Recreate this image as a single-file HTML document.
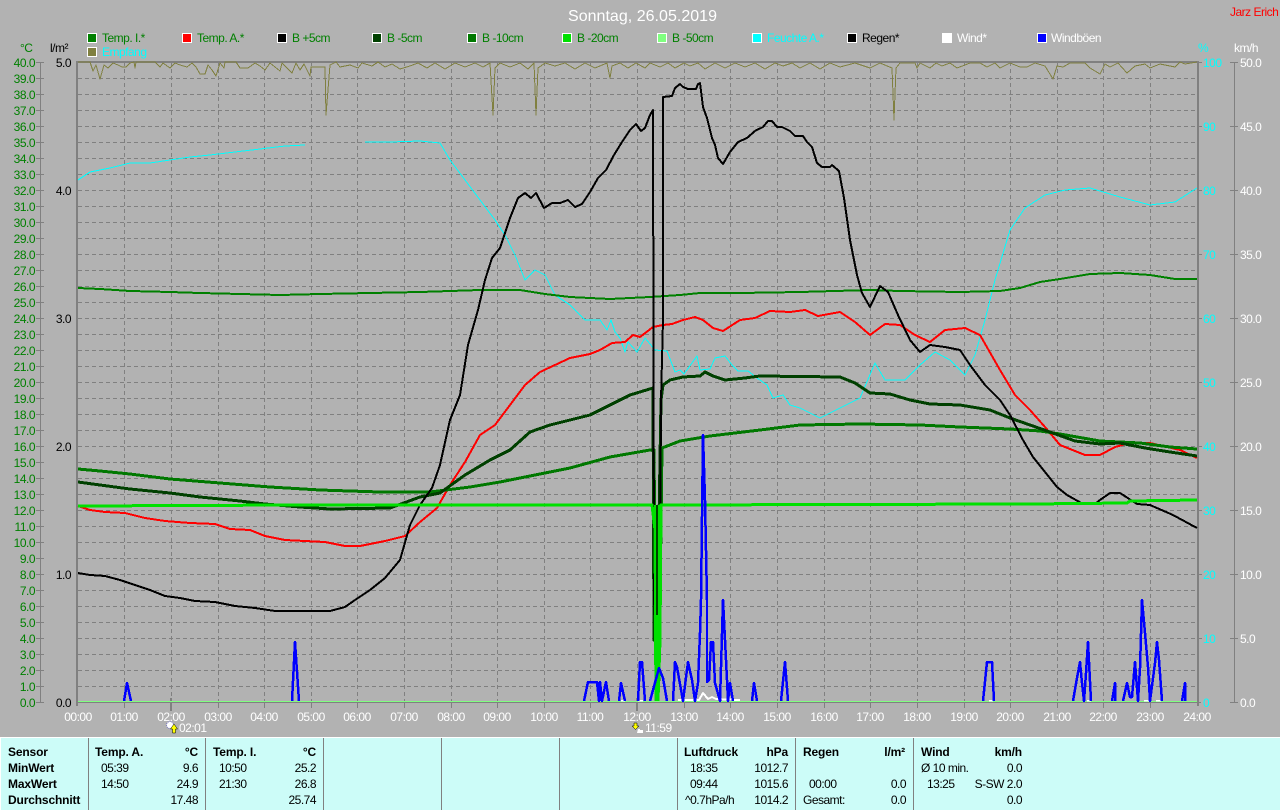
<!DOCTYPE html>
<html lang="de"><head><meta charset="utf-8"><title>Sonntag, 26.05.2019</title>
<style>
html,body{margin:0;padding:0;width:1280px;height:810px;overflow:hidden;background:#b2b2b2}
svg{display:block;position:absolute;left:0;top:0}
text{font-family:"Liberation Sans",Arial,sans-serif;font-size:12px;letter-spacing:-.5px}
.g text{fill:#008000}
.e{text-anchor:end}
.c{text-anchor:middle}
.b{font-weight:bold;letter-spacing:-.15px}
.p text{fill:#000}
polyline{fill:none;stroke-linejoin:round}
</style></head><body>
<svg width="1280" height="810" viewBox="0 0 1280 810" xmlns="http://www.w3.org/2000/svg">
<!-- title -->
<text x="568" y="21" fill="#fff" style="font-size:16px;letter-spacing:0" textLength="149">Sonntag, 26.05.2019</text>
<text x="1230" y="16" fill="#f00">Jarz Erich</text>
<!-- legend -->
<g stroke="#fff" stroke-width="1" shape-rendering="crispEdges">
<rect x="87.5" y="33.5" width="9" height="9" fill="#008000"/>
<rect x="182.5" y="33.5" width="9" height="9" fill="#f00"/>
<rect x="277.5" y="33.5" width="9" height="9" fill="#000"/>
<rect x="372.5" y="33.5" width="9" height="9" fill="#004000"/>
<rect x="467.5" y="33.5" width="9" height="9" fill="#007800"/>
<rect x="562.5" y="33.5" width="9" height="9" fill="#00e000"/>
<rect x="657.5" y="33.5" width="9" height="9" fill="#80ff80"/>
<rect x="752.5" y="33.5" width="9" height="9" fill="#0ff"/>
<rect x="847.5" y="33.5" width="9" height="9" fill="#000"/>
<rect x="942.5" y="33.5" width="9" height="9" fill="#fff"/>
<rect x="1037.5" y="33.5" width="9" height="9" fill="#00f"/>
<rect x="87.5" y="47.5" width="9" height="9" fill="#808040"/>
</g>
<g class="g">
<text x="102" y="42">Temp. I.*</text><text x="197" y="42">Temp. A.*</text><text x="292" y="42">B +5cm</text><text x="387" y="42">B -5cm</text><text x="482" y="42">B -10cm</text><text x="577" y="42">B -20cm</text><text x="672" y="42">B -50cm</text>
</g>
<text x="767" y="42" fill="#0ff">Feuchte A.*</text>
<text x="862" y="42" fill="#000">Regen*</text>
<text x="957" y="42" fill="#fff">Wind*</text>
<text x="1051" y="42" fill="#fff">Windböen</text>
<text x="102" y="56" fill="#0ff">Empfang</text>
<!-- axis headers -->
<text x="20" y="52" fill="#008000">°C</text>
<text x="50" y="52" fill="#000">l/m²</text>
<text x="1198" y="52" fill="#0ff">%</text>
<text x="1234" y="52" fill="#fff">km/h</text>
<!-- grid -->
<g stroke="#808080" stroke-width="1" stroke-dasharray="4 3" shape-rendering="crispEdges">
<path d="M78 78.5H1197M78 94.5H1197M78 110.5H1197M78 126.5H1197M78 142.5H1197M78 158.5H1197M78 174.5H1197M78 190.5H1197M78 206.5H1197M78 222.5H1197M78 238.5H1197M78 254.5H1197M78 270.5H1197M78 286.5H1197M78 302.5H1197M78 318.5H1197M78 334.5H1197M78 350.5H1197M78 366.5H1197M78 382.5H1197M78 398.5H1197M78 414.5H1197M78 430.5H1197M78 446.5H1197M78 462.5H1197M78 478.5H1197M78 494.5H1197M78 510.5H1197M78 526.5H1197M78 542.5H1197M78 558.5H1197M78 574.5H1197M78 590.5H1197M78 606.5H1197M78 622.5H1197M78 638.5H1197M78 654.5H1197M78 670.5H1197M78 686.5H1197"/>
<path d="M124.5 62V702M171.5 62V702M218.5 62V702M264.5 62V702M311.5 62V702M357.5 62V702M404.5 62V702M451.5 62V702M497.5 62V702M544.5 62V702M590.5 62V702M637.5 62V702M684.5 62V702M730.5 62V702M777.5 62V702M824.5 62V702M870.5 62V702M917.5 62V702M964.5 62V702M1010.5 62V702M1057.5 62V702M1103.5 62V702M1150.5 62V702"/>
</g>
<!-- axes -->
<g stroke="#808080" fill="none" shape-rendering="crispEdges">
<path d="M40.5 62V702M1234.5 62V702" stroke-width="1"/>
<path d="M77 61V706M1198 61V706" stroke-width="2"/>
<path d="M76 62H1199" stroke-width="2"/>
<path d="M76 702.5H1201" stroke-width="1"/>
<path d="M36 62.5h8M36 78.5h8M36 94.5h8M36 110.5h8M36 126.5h8M36 142.5h8M36 158.5h8M36 174.5h8M36 190.5h8M36 206.5h8M36 222.5h8M36 238.5h8M36 254.5h8M36 270.5h8M36 286.5h8M36 302.5h8M36 318.5h8M36 334.5h8M36 350.5h8M36 366.5h8M36 382.5h8M36 398.5h8M36 414.5h8M36 430.5h8M36 446.5h8M36 462.5h8M36 478.5h8M36 494.5h8M36 510.5h8M36 526.5h8M36 542.5h8M36 558.5h8M36 574.5h8M36 590.5h8M36 606.5h8M36 622.5h8M36 638.5h8M36 654.5h8M36 670.5h8M36 686.5h8M36 702.5h8"/>
<path d="M1198 62.5h4M1198 126.5h4M1198 190.5h4M1198 254.5h4M1198 318.5h4M1198 382.5h4M1198 446.5h4M1198 510.5h4M1198 574.5h4M1198 638.5h4M1230 62.5h8M1230 126.5h8M1230 190.5h8M1230 254.5h8M1230 318.5h8M1230 382.5h8M1230 446.5h8M1230 510.5h8M1230 574.5h8M1230 638.5h8M1230 702.5h8"/>
<path d="M124.500 703V708M218.500 703V708M264.500 703V708M311.500 703V708M357.500 703V708M404.500 703V708M451.500 703V708M497.500 703V708M544.500 703V708M590.500 703V708M684.500 703V708M730.500 703V708M777.500 703V708M824.500 703V708M870.500 703V708M917.500 703V708M964.500 703V708M1010.500 703V708M1057.500 703V708M1103.500 703V708M1150.500 703V708"/>
<path d="M171 698V711M637 698V711" stroke-width="2"/>
</g>
<!-- left axis labels -->
<g class="g" transform="translate(0,1)">
<text class="e" x="35" y="66">40.0</text><text class="e" x="35" y="82">39.0</text><text class="e" x="35" y="98">38.0</text><text class="e" x="35" y="114">37.0</text><text class="e" x="35" y="130">36.0</text><text class="e" x="35" y="146">35.0</text><text class="e" x="35" y="162">34.0</text><text class="e" x="35" y="178">33.0</text><text class="e" x="35" y="194">32.0</text><text class="e" x="35" y="210">31.0</text><text class="e" x="35" y="226">30.0</text><text class="e" x="35" y="242">29.0</text><text class="e" x="35" y="258">28.0</text><text class="e" x="35" y="274">27.0</text><text class="e" x="35" y="290">26.0</text><text class="e" x="35" y="306">25.0</text><text class="e" x="35" y="322">24.0</text><text class="e" x="35" y="338">23.0</text><text class="e" x="35" y="354">22.0</text><text class="e" x="35" y="370">21.0</text><text class="e" x="35" y="386">20.0</text><text class="e" x="35" y="402">19.0</text><text class="e" x="35" y="418">18.0</text><text class="e" x="35" y="434">17.0</text><text class="e" x="35" y="450">16.0</text><text class="e" x="35" y="466">15.0</text><text class="e" x="35" y="482">14.0</text><text class="e" x="35" y="498">13.0</text><text class="e" x="35" y="514">12.0</text><text class="e" x="35" y="530">11.0</text><text class="e" x="35" y="546">10.0</text><text class="e" x="35" y="562">9.0</text><text class="e" x="35" y="578">8.0</text><text class="e" x="35" y="594">7.0</text><text class="e" x="35" y="610">6.0</text><text class="e" x="35" y="626">5.0</text><text class="e" x="35" y="642">4.0</text><text class="e" x="35" y="658">3.0</text><text class="e" x="35" y="674">2.0</text><text class="e" x="35" y="690">1.0</text><text class="e" x="35" y="706">0.0</text>
</g>
<g fill="#000" transform="translate(0,1)">
<text class="e" x="71" y="66">5.0</text><text class="e" x="71" y="194">4.0</text><text class="e" x="71" y="322">3.0</text><text class="e" x="71" y="450">2.0</text><text class="e" x="71" y="578">1.0</text><text class="e" x="71" y="706">0.0</text>
</g>
<!-- right labels -->
<g fill="#0ff" transform="translate(0,1)">
<text x="1203" y="66">100</text><text x="1203" y="130">90</text><text x="1203" y="194">80</text><text x="1203" y="258">70</text><text x="1203" y="322">60</text><text x="1203" y="386">50</text><text x="1203" y="450">40</text><text x="1203" y="514">30</text><text x="1203" y="578">20</text><text x="1203" y="642">10</text><text x="1203" y="706">0</text>
</g>
<g fill="#fff" transform="translate(0,1)">
<text x="1240" y="66">50.0</text><text x="1240" y="130">45.0</text><text x="1240" y="194">40.0</text><text x="1240" y="258">35.0</text><text x="1240" y="322">30.0</text><text x="1240" y="386">25.0</text><text x="1240" y="450">20.0</text><text x="1240" y="514">15.0</text><text x="1240" y="578">10.0</text><text x="1240" y="642">5.0</text><text x="1240" y="706">0.0</text>
</g>
<!-- time labels -->
<g fill="#fff">
<text class="c" x="78" y="721">00:00</text><text class="c" x="124" y="721">01:00</text><text class="c" x="171" y="721">02:00</text><text class="c" x="218" y="721">03:00</text><text class="c" x="264" y="721">04:00</text><text class="c" x="311" y="721">05:00</text><text class="c" x="357" y="721">06:00</text><text class="c" x="404" y="721">07:00</text><text class="c" x="451" y="721">08:00</text><text class="c" x="497" y="721">09:00</text><text class="c" x="544" y="721">10:00</text><text class="c" x="590" y="721">11:00</text><text class="c" x="637" y="721">12:00</text><text class="c" x="684" y="721">13:00</text><text class="c" x="730" y="721">14:00</text><text class="c" x="777" y="721">15:00</text><text class="c" x="824" y="721">16:00</text><text class="c" x="870" y="721">17:00</text><text class="c" x="917" y="721">18:00</text><text class="c" x="964" y="721">19:00</text><text class="c" x="1010" y="721">20:00</text><text class="c" x="1057" y="721">21:00</text><text class="c" x="1103" y="721">22:00</text><text class="c" x="1150" y="721">23:00</text><text class="c" x="1197" y="721">24:00</text>
<text x="179" y="732">02:01</text><text x="645" y="732">11:59</text>
</g>
<!-- sun icons -->
<circle cx="170" cy="725" r="3.5" fill="#fff" stroke="#7070c0" stroke-width="1" stroke-dasharray="1 1"/>
<path d="M174 724l-3.500 5h2v4h3v-4h2z" fill="#ff0" stroke="#000" stroke-width=".5"/>
<path d="M634 723h3v3h2l-3.500 3.500-3.500-3.500h2z" fill="#ff0" stroke="#000" stroke-width=".5"/>
<path d="M638 729h2v1h3v3h-6z" fill="#fff"/>
<!-- curves -->
<g shape-rendering="crispEdges">
<!-- Empfang -->
<polyline stroke="#808040" stroke-width="1" points="78,62 90,62 93,71 96,65 100,79 104,65 108,68 113,63 118,65 122,67 126,67 130,63 134,62 135,68 136,62 155,62 160,67 163,63 170,68 175,63 180,65 187,67 192,63 196,67 200,74 205,74 208,65 212,70 216,76 220,63 224,68 225,62 236,62 240,68 248,68 255,63 260,66 265,70 270,63 280,71 282,63 292,73 296,63 300,70 304,64 310,76 311,67 325,67 326,115 328,90 330,65 336,62 340,67 345,66 350,65 358,68 362,63 372,66 378,62 385,67 392,64 400,69 410,66 418,63 427,68 435,63 445,69 455,63 465,67 475,63 483,67 490,63 493,115 495,68 500,63 510,67 520,63 528,69 534,63 536,115 538,68 545,63 555,66 565,63 575,69 585,63 595,68 607,63 610,78 612,66 620,63 628,68 636,63 645,68 650,63 660,67 668,63 675,68 684,63 690,66 698,63 705,69 715,63 725,68 735,63 745,67 755,63 765,69 775,63 783,66 792,63 800,68 810,63 820,69 830,63 840,67 855,63 870,68 880,63 892,68 894,120 896,68 900,63 915,63 917,68 920,63 930,68 936,63 942,66 950,63 957,68 970,63 980,63 987,67 995,63 1000,68 1010,63 1020,67 1027,67 1035,63 1045,66 1053,79 1057,66 1063,67 1070,63 1085,63 1090,68 1100,74 1105,64 1110,67 1118,63 1127,73 1135,66 1145,64 1150,68 1160,64 1175,67 1180,62 1185,64 1197,62"/>
<!-- cyan -->
<polyline stroke="#0ff" stroke-width="1" points="78,180 90,172 110,168 130,163 150,163 170,160 190,157 210,155 235,152 260,149 285,146 305,145"/>
<polyline stroke="#0ff" stroke-width="1" points="365,142 390,142 420,141 440,143 450,160 465,180 480,200 495,220 505,235 515,255 525,280 535,270 545,275 555,295 570,305 585,320 600,320 607,330 611,320 615,332 620,338 625,352 628,342 637,352 645,338 655,350 667,351 675,372 680,370 684,374 697,356 700,370 710,369 715,358 725,356 732,365 738,371 748,371 757,378 767,385 773,398 783,395 790,405 800,408 820,418 840,408 860,398 875,363 885,380 905,380 920,365 935,352 950,360 965,375 975,355 985,320 995,280 1010,230 1025,208 1045,195 1065,190 1090,188 1120,197 1150,205 1175,202 1197,188"/>
<!-- Temp I -->
<polyline stroke="#008000" stroke-width="2" points="78,288 100,289 130,291 170,292 200,293 240,294 280,295 320,294 370,293 420,292 480,290 520,290 545,294 570,297 610,299 650,297 680,295 700,293 740,293 800,292 870,290 900,291 960,292 1000,291 1020,288 1040,282 1060,279 1090,274 1120,273 1150,275 1175,279 1197,279"/>
<!-- Temp A -->
<polyline stroke="#f00" stroke-width="2" points="78,506 90,510 105,512 125,513 145,518 165,521 190,523 215,524 230,529 250,530 265,536 285,540 305,541 325,542 345,546 360,546 385,541 405,536 420,522 437,508 450,485 465,462 480,435 495,425 510,405 525,385 540,372 555,365 570,358 590,354 600,350 612,343 625,342 633,335 640,337 653,327 663,325 672,324 683,320 695,317 703,320 713,328 723,331 740,320 755,318 770,311 790,312 805,310 818,316 840,312 855,322 870,335 885,324 900,325 915,335 930,342 945,330 965,328 980,335 1000,370 1015,395 1030,410 1045,427 1060,445 1085,455 1100,455 1115,447 1130,443 1150,443 1180,450 1197,458"/>
<!-- B-10 -->
<polyline stroke="#007800" stroke-width="3" points="78,469 100,471 130,474 170,479 220,483 270,487 320,490 380,492 430,492 470,487 500,482 530,476 570,468 610,457 650,450 654,450 656,680 659,680 662,448 680,441 710,436 760,430 800,425 860,424 920,425 960,427 1010,429 1040,431 1060,434 1100,441 1140,443 1170,447 1197,449"/>
<!-- B-5 -->
<polyline stroke="#004000" stroke-width="3" points="78,482 100,485 130,489 170,493 200,497 240,501 265,504 300,507 330,509 390,508 420,497 440,493 465,475 490,460 510,450 530,432 550,425 570,420 590,415 610,405 630,395 653,388 654,640 657,640 661,400 663,385 670,380 683,377 700,376 705,372 713,376 725,380 745,378 760,376 840,377 855,383 870,393 890,394 910,400 930,404 960,405 990,410 1010,418 1030,425 1050,432 1075,441 1100,444 1120,443 1145,448 1170,452 1197,456"/>
<!-- B+5 -->
<polyline stroke="#000" stroke-width="2" points="78,573 90,575 105,576 120,580 135,585 150,590 165,596 180,598 195,601 215,602 235,606 255,608 275,611 300,611 330,611 345,607 355,600 370,590 385,578 400,560 410,525 420,505 432,488 440,465 450,420 460,395 468,345 478,310 485,280 492,258 500,248 510,218 518,198 525,193 531,198 536,193 544,208 552,203 560,203 568,200 575,207 582,204 590,192 598,178 606,170 614,155 622,142 630,130 636,124 641,131 645,128 650,115 653,110 654,600 657,660 660,590 661,400 663,320 663,97 672,96 675,88 680,84 683,87 688,89 696,89 698,84 700,83 703,107 707,118 712,138 715,145 718,158 723,164 730,152 738,142 747,138 755,131 763,127 768,121 772,121 777,127 782,127 790,131 795,136 803,136 807,142 812,147 817,163 822,167 830,167 832,165 839,171 844,198 850,240 857,275 862,293 870,307 880,286 888,292 898,315 910,340 920,352 930,345 945,347 960,350 970,365 985,385 1000,400 1010,415 1023,440 1033,457 1057,487 1067,495 1083,504 1095,504 1100,500 1110,493 1120,493 1137,504 1150,505 1173,515 1197,528"/>
<!-- B-20 -->
<polyline stroke="#00e000" stroke-width="3" points="78,506 300,505 652,505 655,530 656,700 658,700 660,640 661,505 1030,504 1127,503 1130,501 1197,500"/>
<rect x="654" y="505" width="6" height="160" fill="#00e000"/>
<rect x="655" y="660" width="4" height="42" fill="#00e000"/>
<path d="M657 505V615" stroke="#004000" stroke-width="2"/>
<!-- B-50 -->
<path d="M78 701.500H1197" stroke="#80ff80" stroke-width="1"/>
<!-- white wind -->
<polyline stroke="#fff" stroke-width="2" points="678,700 694,700 699,700 703,693 708,699 712,697 716,699 740,700"/>
<path d="M621 700.500h4M638 700.500h5M989 700.500h4M1087 700.500h4M1144 700.500h5M1156 700.500h5" stroke="#fff" stroke-width="1.500"/>
<!-- wind gusts -->
<g stroke="#00f" stroke-width="2.500">
<polyline points="124,701 127,683 131,701"/>
<polyline points="292,701 295,642 299,701"/>
<polyline points="584,701 588,682 597,682 599,701 600,682 602,701 606,682 609,701"/>
<polyline points="619,701 621,683 625,701"/>
<polyline points="638,701 640,662 642,662 645,701"/>
<polyline points="650,701 659,668 663,678 667,701"/>
<polyline points="673,701 675,662 677,667 683,701 688,662 692,680 695,701 698,683 700,633 701,600 703,435 705,500 707,600 707,682 709,680 711,642 713,642 715,683 720,701 723,600 727,680 728,701 730,683 733,701"/>
<polyline points="752,701 754,683 757,701"/>
<polyline points="781,701 785,662 788,701"/>
<polyline points="983,701 987,662 992,662 994,701"/>
<polyline points="1073,701 1077,678 1080,662 1082,683 1084,701 1086,673 1088,642 1091,701"/>
<polyline points="1112,701 1115,683 1115,701"/>
<polyline points="1123,701 1127,683 1130,697 1132,697 1135,662 1138,701 1140,668 1142,600 1145,633 1148,667 1150,701 1155,663 1157,642 1159,660 1162,701"/>
<polyline points="1182,701 1185,683 1185,701"/>
</g>
</g>
<!-- bottom panel -->
<rect x="0" y="737" width="1280" height="73" fill="#fff"/>
<rect x="1" y="738" width="1279" height="72" fill="#ccfcf8"/>
<path d="M88.500 738V810M205.500 738V810M323.500 738V810M441.500 738V810M559.500 738V810M677.500 738V810M795.500 738V810M913.500 738V810" stroke="#808080" stroke-width="1" shape-rendering="crispEdges"/>
<g class="p">
<text class="b" x="8" y="756">Sensor</text><text class="b" x="8" y="772">MinWert</text><text class="b" x="8" y="788">MaxWert</text><text class="b" x="8" y="804">Durchschnitt</text>
<text class="b" x="95" y="756">Temp. A.</text><text class="b e" x="198" y="756">°C</text>
<text x="101" y="772">05:39</text><text class="e" x="198" y="772">9.6</text>
<text x="101" y="788">14:50</text><text class="e" x="198" y="788">24.9</text>
<text class="e" x="198" y="804">17.48</text>
<text class="b" x="213" y="756">Temp. I.</text><text class="b e" x="316" y="756">°C</text>
<text x="219" y="772">10:50</text><text class="e" x="316" y="772">25.2</text>
<text x="219" y="788">21:30</text><text class="e" x="316" y="788">26.8</text>
<text class="e" x="316" y="804">25.74</text>
<text class="b" x="684" y="756">Luftdruck</text><text class="b e" x="788" y="756">hPa</text>
<text x="690" y="772">18:35</text><text class="e" x="788" y="772">1012.7</text>
<text x="690" y="788">09:44</text><text class="e" x="788" y="788">1015.6</text>
<text x="685" y="804">^0.7hPa/h</text><text class="e" x="788" y="804">1014.2</text>
<text class="b" x="803" y="756">Regen</text><text class="b e" x="905" y="756">l/m²</text>
<text x="809" y="788">00:00</text><text class="e" x="906" y="788">0.0</text>
<text x="803" y="804">Gesamt:</text><text class="e" x="906" y="804">0.0</text>
<text class="b" x="921" y="756">Wind</text><text class="b e" x="1022" y="756">km/h</text>
<text x="921" y="772">Ø 10 min.</text><text class="e" x="1022" y="772">0.0</text>
<text x="927" y="788">13:25</text><text class="e" x="1022" y="788">S-SW 2.0</text>
<text class="e" x="1022" y="804">0.0</text>
</g>
</svg>
</body></html>
